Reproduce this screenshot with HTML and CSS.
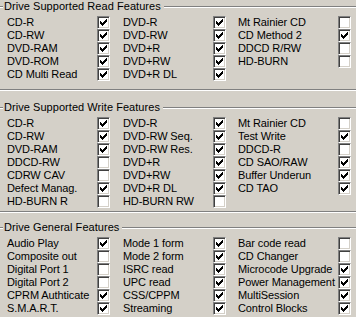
FILE: index.html
```html
<!DOCTYPE html>
<html>
<head>
<meta charset="utf-8">
<link rel="stylesheet" href="styles.css">
</head>
<body>
<div class="panel">
  <section class="group group-read">
    <div class="legend"><span class="legend-line legend-start"></span><span class="legend-text">Drive Supported Read Features</span><span class="legend-line legend-rest"></span></div>
    <div class="grid">
      <div class="item"><span class="label">CD-R</span><span class="cb"><svg viewBox="0 0 7 7" width="7" height="7"><path d="M0 2h1v3H0zM1 3h1v3H1zM2 4h1v3H2zM3 3h1v3H3zM4 2h1v3H4zM5 1h1v3H5zM6 0h1v3H6z"/></svg></span></div>
      <div class="item"><span class="label">DVD-R</span><span class="cb"><svg viewBox="0 0 7 7" width="7" height="7"><path d="M0 2h1v3H0zM1 3h1v3H1zM2 4h1v3H2zM3 3h1v3H3zM4 2h1v3H4zM5 1h1v3H5zM6 0h1v3H6z"/></svg></span></div>
      <div class="item wide"><span class="label">Mt Rainier CD</span><span class="cb"></span></div>

      <div class="item"><span class="label">CD-RW</span><span class="cb"><svg viewBox="0 0 7 7" width="7" height="7"><path d="M0 2h1v3H0zM1 3h1v3H1zM2 4h1v3H2zM3 3h1v3H3zM4 2h1v3H4zM5 1h1v3H5zM6 0h1v3H6z"/></svg></span></div>
      <div class="item"><span class="label">DVD-RW</span><span class="cb"><svg viewBox="0 0 7 7" width="7" height="7"><path d="M0 2h1v3H0zM1 3h1v3H1zM2 4h1v3H2zM3 3h1v3H3zM4 2h1v3H4zM5 1h1v3H5zM6 0h1v3H6z"/></svg></span></div>
      <div class="item wide"><span class="label">CD Method 2</span><span class="cb"><svg viewBox="0 0 7 7" width="7" height="7"><path d="M0 2h1v3H0zM1 3h1v3H1zM2 4h1v3H2zM3 3h1v3H3zM4 2h1v3H4zM5 1h1v3H5zM6 0h1v3H6z"/></svg></span></div>

      <div class="item"><span class="label">DVD-RAM</span><span class="cb"><svg viewBox="0 0 7 7" width="7" height="7"><path d="M0 2h1v3H0zM1 3h1v3H1zM2 4h1v3H2zM3 3h1v3H3zM4 2h1v3H4zM5 1h1v3H5zM6 0h1v3H6z"/></svg></span></div>
      <div class="item"><span class="label">DVD+R</span><span class="cb"><svg viewBox="0 0 7 7" width="7" height="7"><path d="M0 2h1v3H0zM1 3h1v3H1zM2 4h1v3H2zM3 3h1v3H3zM4 2h1v3H4zM5 1h1v3H5zM6 0h1v3H6z"/></svg></span></div>
      <div class="item wide"><span class="label">DDCD R/RW</span><span class="cb"></span></div>

      <div class="item"><span class="label">DVD-ROM</span><span class="cb"><svg viewBox="0 0 7 7" width="7" height="7"><path d="M0 2h1v3H0zM1 3h1v3H1zM2 4h1v3H2zM3 3h1v3H3zM4 2h1v3H4zM5 1h1v3H5zM6 0h1v3H6z"/></svg></span></div>
      <div class="item"><span class="label">DVD+RW</span><span class="cb"><svg viewBox="0 0 7 7" width="7" height="7"><path d="M0 2h1v3H0zM1 3h1v3H1zM2 4h1v3H2zM3 3h1v3H3zM4 2h1v3H4zM5 1h1v3H5zM6 0h1v3H6z"/></svg></span></div>
      <div class="item wide"><span class="label">HD-BURN</span><span class="cb"></span></div>

      <div class="item"><span class="label">CD Multi Read</span><span class="cb"><svg viewBox="0 0 7 7" width="7" height="7"><path d="M0 2h1v3H0zM1 3h1v3H1zM2 4h1v3H2zM3 3h1v3H3zM4 2h1v3H4zM5 1h1v3H5zM6 0h1v3H6z"/></svg></span></div>
      <div class="item"><span class="label">DVD+R DL</span><span class="cb"><svg viewBox="0 0 7 7" width="7" height="7"><path d="M0 2h1v3H0zM1 3h1v3H1zM2 4h1v3H2zM3 3h1v3H3zM4 2h1v3H4zM5 1h1v3H5zM6 0h1v3H6z"/></svg></span></div>
      <div class="item wide"></div>
    </div>
  </section>

  <section class="group group-write">
    <div class="legend"><span class="legend-line legend-start"></span><span class="legend-text">Drive Supported Write Features</span><span class="legend-line legend-rest"></span></div>
    <div class="grid">
      <div class="item"><span class="label">CD-R</span><span class="cb"><svg viewBox="0 0 7 7" width="7" height="7"><path d="M0 2h1v3H0zM1 3h1v3H1zM2 4h1v3H2zM3 3h1v3H3zM4 2h1v3H4zM5 1h1v3H5zM6 0h1v3H6z"/></svg></span></div>
      <div class="item"><span class="label">DVD-R</span><span class="cb"><svg viewBox="0 0 7 7" width="7" height="7"><path d="M0 2h1v3H0zM1 3h1v3H1zM2 4h1v3H2zM3 3h1v3H3zM4 2h1v3H4zM5 1h1v3H5zM6 0h1v3H6z"/></svg></span></div>
      <div class="item wide"><span class="label">Mt Rainier CD</span><span class="cb"></span></div>

      <div class="item"><span class="label">CD-RW</span><span class="cb"><svg viewBox="0 0 7 7" width="7" height="7"><path d="M0 2h1v3H0zM1 3h1v3H1zM2 4h1v3H2zM3 3h1v3H3zM4 2h1v3H4zM5 1h1v3H5zM6 0h1v3H6z"/></svg></span></div>
      <div class="item"><span class="label">DVD-RW Seq.</span><span class="cb"><svg viewBox="0 0 7 7" width="7" height="7"><path d="M0 2h1v3H0zM1 3h1v3H1zM2 4h1v3H2zM3 3h1v3H3zM4 2h1v3H4zM5 1h1v3H5zM6 0h1v3H6z"/></svg></span></div>
      <div class="item wide"><span class="label">Test Write</span><span class="cb"><svg viewBox="0 0 7 7" width="7" height="7"><path d="M0 2h1v3H0zM1 3h1v3H1zM2 4h1v3H2zM3 3h1v3H3zM4 2h1v3H4zM5 1h1v3H5zM6 0h1v3H6z"/></svg></span></div>

      <div class="item"><span class="label">DVD-RAM</span><span class="cb"><svg viewBox="0 0 7 7" width="7" height="7"><path d="M0 2h1v3H0zM1 3h1v3H1zM2 4h1v3H2zM3 3h1v3H3zM4 2h1v3H4zM5 1h1v3H5zM6 0h1v3H6z"/></svg></span></div>
      <div class="item"><span class="label">DVD-RW Res.</span><span class="cb"><svg viewBox="0 0 7 7" width="7" height="7"><path d="M0 2h1v3H0zM1 3h1v3H1zM2 4h1v3H2zM3 3h1v3H3zM4 2h1v3H4zM5 1h1v3H5zM6 0h1v3H6z"/></svg></span></div>
      <div class="item wide"><span class="label">DDCD-R</span><span class="cb"></span></div>

      <div class="item"><span class="label">DDCD-RW</span><span class="cb"></span></div>
      <div class="item"><span class="label">DVD+R</span><span class="cb"><svg viewBox="0 0 7 7" width="7" height="7"><path d="M0 2h1v3H0zM1 3h1v3H1zM2 4h1v3H2zM3 3h1v3H3zM4 2h1v3H4zM5 1h1v3H5zM6 0h1v3H6z"/></svg></span></div>
      <div class="item wide"><span class="label">CD SAO/RAW</span><span class="cb"><svg viewBox="0 0 7 7" width="7" height="7"><path d="M0 2h1v3H0zM1 3h1v3H1zM2 4h1v3H2zM3 3h1v3H3zM4 2h1v3H4zM5 1h1v3H5zM6 0h1v3H6z"/></svg></span></div>

      <div class="item"><span class="label">CDRW CAV</span><span class="cb"></span></div>
      <div class="item"><span class="label">DVD+RW</span><span class="cb"><svg viewBox="0 0 7 7" width="7" height="7"><path d="M0 2h1v3H0zM1 3h1v3H1zM2 4h1v3H2zM3 3h1v3H3zM4 2h1v3H4zM5 1h1v3H5zM6 0h1v3H6z"/></svg></span></div>
      <div class="item wide"><span class="label">Buffer Underun</span><span class="cb"><svg viewBox="0 0 7 7" width="7" height="7"><path d="M0 2h1v3H0zM1 3h1v3H1zM2 4h1v3H2zM3 3h1v3H3zM4 2h1v3H4zM5 1h1v3H5zM6 0h1v3H6z"/></svg></span></div>

      <div class="item"><span class="label">Defect Manag.</span><span class="cb"><svg viewBox="0 0 7 7" width="7" height="7"><path d="M0 2h1v3H0zM1 3h1v3H1zM2 4h1v3H2zM3 3h1v3H3zM4 2h1v3H4zM5 1h1v3H5zM6 0h1v3H6z"/></svg></span></div>
      <div class="item"><span class="label">DVD+R DL</span><span class="cb"><svg viewBox="0 0 7 7" width="7" height="7"><path d="M0 2h1v3H0zM1 3h1v3H1zM2 4h1v3H2zM3 3h1v3H3zM4 2h1v3H4zM5 1h1v3H5zM6 0h1v3H6z"/></svg></span></div>
      <div class="item wide"><span class="label">CD TAO</span><span class="cb"><svg viewBox="0 0 7 7" width="7" height="7"><path d="M0 2h1v3H0zM1 3h1v3H1zM2 4h1v3H2zM3 3h1v3H3zM4 2h1v3H4zM5 1h1v3H5zM6 0h1v3H6z"/></svg></span></div>

      <div class="item"><span class="label">HD-BURN R</span><span class="cb"></span></div>
      <div class="item"><span class="label">HD-BURN RW</span><span class="cb"></span></div>
      <div class="item wide"></div>
    </div>
  </section>

  <section class="group group-general">
    <div class="legend"><span class="legend-line legend-start"></span><span class="legend-text">Drive General Features</span><span class="legend-line legend-rest"></span></div>
    <div class="grid">
      <div class="item"><span class="label">Audio Play</span><span class="cb"><svg viewBox="0 0 7 7" width="7" height="7"><path d="M0 2h1v3H0zM1 3h1v3H1zM2 4h1v3H2zM3 3h1v3H3zM4 2h1v3H4zM5 1h1v3H5zM6 0h1v3H6z"/></svg></span></div>
      <div class="item"><span class="label">Mode 1 form</span><span class="cb"><svg viewBox="0 0 7 7" width="7" height="7"><path d="M0 2h1v3H0zM1 3h1v3H1zM2 4h1v3H2zM3 3h1v3H3zM4 2h1v3H4zM5 1h1v3H5zM6 0h1v3H6z"/></svg></span></div>
      <div class="item wide"><span class="label">Bar code read</span><span class="cb"></span></div>

      <div class="item"><span class="label">Composite out</span><span class="cb"></span></div>
      <div class="item"><span class="label">Mode 2 form</span><span class="cb"><svg viewBox="0 0 7 7" width="7" height="7"><path d="M0 2h1v3H0zM1 3h1v3H1zM2 4h1v3H2zM3 3h1v3H3zM4 2h1v3H4zM5 1h1v3H5zM6 0h1v3H6z"/></svg></span></div>
      <div class="item wide"><span class="label">CD Changer</span><span class="cb"></span></div>

      <div class="item"><span class="label">Digital Port 1</span><span class="cb"></span></div>
      <div class="item"><span class="label">ISRC read</span><span class="cb"><svg viewBox="0 0 7 7" width="7" height="7"><path d="M0 2h1v3H0zM1 3h1v3H1zM2 4h1v3H2zM3 3h1v3H3zM4 2h1v3H4zM5 1h1v3H5zM6 0h1v3H6z"/></svg></span></div>
      <div class="item wide"><span class="label">Microcode Upgrade</span><span class="cb"><svg viewBox="0 0 7 7" width="7" height="7"><path d="M0 2h1v3H0zM1 3h1v3H1zM2 4h1v3H2zM3 3h1v3H3zM4 2h1v3H4zM5 1h1v3H5zM6 0h1v3H6z"/></svg></span></div>

      <div class="item"><span class="label">Digital Port 2</span><span class="cb"></span></div>
      <div class="item"><span class="label">UPC read</span><span class="cb"><svg viewBox="0 0 7 7" width="7" height="7"><path d="M0 2h1v3H0zM1 3h1v3H1zM2 4h1v3H2zM3 3h1v3H3zM4 2h1v3H4zM5 1h1v3H5zM6 0h1v3H6z"/></svg></span></div>
      <div class="item wide"><span class="label">Power Management</span><span class="cb"><svg viewBox="0 0 7 7" width="7" height="7"><path d="M0 2h1v3H0zM1 3h1v3H1zM2 4h1v3H2zM3 3h1v3H3zM4 2h1v3H4zM5 1h1v3H5zM6 0h1v3H6z"/></svg></span></div>

      <div class="item"><span class="label">CPRM Authticate</span><span class="cb"><svg viewBox="0 0 7 7" width="7" height="7"><path d="M0 2h1v3H0zM1 3h1v3H1zM2 4h1v3H2zM3 3h1v3H3zM4 2h1v3H4zM5 1h1v3H5zM6 0h1v3H6z"/></svg></span></div>
      <div class="item"><span class="label">CSS/CPPM</span><span class="cb"><svg viewBox="0 0 7 7" width="7" height="7"><path d="M0 2h1v3H0zM1 3h1v3H1zM2 4h1v3H2zM3 3h1v3H3zM4 2h1v3H4zM5 1h1v3H5zM6 0h1v3H6z"/></svg></span></div>
      <div class="item wide"><span class="label">MultiSession</span><span class="cb"><svg viewBox="0 0 7 7" width="7" height="7"><path d="M0 2h1v3H0zM1 3h1v3H1zM2 4h1v3H2zM3 3h1v3H3zM4 2h1v3H4zM5 1h1v3H5zM6 0h1v3H6z"/></svg></span></div>

      <div class="item"><span class="label">S.M.A.R.T.</span><span class="cb"><svg viewBox="0 0 7 7" width="7" height="7"><path d="M0 2h1v3H0zM1 3h1v3H1zM2 4h1v3H2zM3 3h1v3H3zM4 2h1v3H4zM5 1h1v3H5zM6 0h1v3H6z"/></svg></span></div>
      <div class="item"><span class="label">Streaming</span><span class="cb"><svg viewBox="0 0 7 7" width="7" height="7"><path d="M0 2h1v3H0zM1 3h1v3H1zM2 4h1v3H2zM3 3h1v3H3zM4 2h1v3H4zM5 1h1v3H5zM6 0h1v3H6z"/></svg></span></div>
      <div class="item wide"><span class="label">Control Blocks</span><span class="cb"><svg viewBox="0 0 7 7" width="7" height="7"><path d="M0 2h1v3H0zM1 3h1v3H1zM2 4h1v3H2zM3 3h1v3H3zM4 2h1v3H4zM5 1h1v3H5zM6 0h1v3H6z"/></svg></span></div>
    </div>
  </section>
</div>
</body>
</html>
```

FILE: styles.css
```css
html, body {
  margin: 0;
  padding: 0;
  background: #d4d0c8;
}

body {
  width: 356px;
  height: 317px;
  overflow: hidden;
  font-family: "Liberation Sans", Arial, sans-serif;
  font-size: 11px;
  letter-spacing: -0.1px;
  color: #000;
}

.panel {
  display: flex;
  flex-direction: column;
}

.group {
  border-bottom: 1px solid #808080;
  box-shadow: 0 1px 0 #fff;
}

.group-read {
  padding-bottom: 8px;
  margin-bottom: 11px;
}

.group-write {
  padding-bottom: 3px;
  margin-bottom: 9px;
}

.group-general {
  border-bottom: none;
  box-shadow: none;
}

.legend {
  display: flex;
  align-items: center;
  height: 13px;
  line-height: 13px;
}

.legend-line {
  height: 0;
  border-top: 1px solid #808080;
  border-bottom: 1px solid #fff;
}

.legend-start {
  width: 3px;
  flex: none;
}

.legend-text {
  padding: 0 3px 0 1px;
  letter-spacing: 0.05px;
  white-space: nowrap;
}

.legend-rest {
  flex: 1;
}

.grid {
  display: grid;
  grid-template-columns: 103px 102px 113px;
  grid-auto-rows: 13px;
  column-gap: 13px;
  margin-top: 3px;
  padding-left: 7px;
}

.item {
  display: flex;
  align-items: center;
  height: 13px;
}

.label {
  width: 90px;
  flex: none;
  line-height: 13px;
  white-space: nowrap;
}

.wide .label {
  width: 100px;
}

.cb {
  display: flex;
  flex: none;
  box-sizing: border-box;
  width: 13px;
  height: 13px;
  padding: 2px;
  background: #fff;
  border: 1px solid;
  border-color: #808080 #fff #fff #808080;
  box-shadow: inset 1px 1px #404040, inset -1px -1px #d4d0c8;
}

.cb svg {
  display: block;
  shape-rendering: crispEdges;
}
```
